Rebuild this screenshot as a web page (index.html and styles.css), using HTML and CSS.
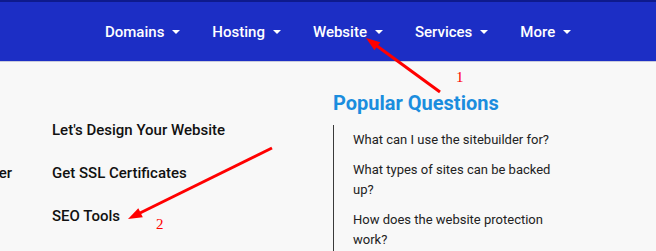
FILE: index.html
```html
<!DOCTYPE html>
<html lang="en">
	<head>
		<meta charset="utf-8">
		<title>Website menu</title>
		<link rel="stylesheet" href="styles.css">
	</head>
	<body>
		<div class="topline"></div>
		<nav class="nav">
			<a class="nav-item">Domains <span class="caret"></span></a>
			<a class="nav-item">Hosting <span class="caret"></span></a>
			<a class="nav-item">Website <span class="caret"></span></a>
			<a class="nav-item">Services <span class="caret"></span></a>
			<a class="nav-item">More <span class="caret"></span></a>
		</nav>
		<div class="content">
			<div class="col-cut">
				<div class="row"></div>
				<div class="row"><span>Website Builder</span></div>
				<div class="row"></div>
			</div>
			<div class="col-menu">
				<div class="row">Let's Design Your Website</div>
				<div class="row">Get SSL Certificates</div>
				<div class="row">SEO Tools</div>
			</div>
			<div class="col-faq">
				<h2 class="faq-title">Popular Questions</h2>
				<div class="faq-list">
					<p class="faq-item">What can I use the sitebuilder for?</p>
					<p class="faq-item">What types of sites can be backed up?</p>
					<p class="faq-item">How does the website protection work?</p>
				</div>
			</div>
		</div>
		<svg class="marks" width="656" height="251" viewBox="0 0 656 251">
			<line x1="440" y1="92" x2="377" y2="46" stroke="#f00" stroke-width="3"/>
			<polygon points="366,38 380.3,42.2 374.4,50.3" fill="#f00"/>
			<text x="456" y="82" class="mark-num">1</text>
			<line x1="272" y1="148" x2="140" y2="213" stroke="#f00" stroke-width="3"/>
			<polygon points="128,219 142.8,217.3 138.3,208.3" fill="#f00"/>
			<text x="156" y="229" class="mark-num">2</text>
		</svg>
	</body>
</html>
```

FILE: styles.css
```css
body {
	margin: 0;
	background-color: #F8F8F8;
	font-family: Roboto, "Liberation Sans", sans-serif;
	overflow: hidden;
}

.topline {
	height: 2px;
	background-color: #0E1A8C;
}

.nav {
	display: flex;
	align-items: center;
	gap: 32px;
	height: 59px;
	padding-left: 105px;
	background-color: #1C2EC5;
	border-bottom: 1px solid #C9CBDC;
}

.nav-item {
	display: flex;
	align-items: center;
	color: #FFFFFF;
	font-size: 15px;
	font-weight: 500;
}

.caret {
	width: 0;
	height: 0;
	margin-left: 8px;
	border-left: 4px solid transparent;
	border-right: 4px solid transparent;
	border-top: 4px solid #FFFFFF;
}

.content {
	display: flex;
}

.col-cut {
	width: 12px;
	padding: 58px 40px 0 0;
	overflow: hidden;
}

.col-cut .row {
	display: flex;
	justify-content: flex-end;
	white-space: nowrap;
}

.col-menu {
	width: 281px;
	padding-top: 58px;
}

.row {
	height: 20px;
	line-height: 20px;
	margin-bottom: 23px;
	font-size: 15px;
	font-weight: 500;
	color: #111111;
}

.col-faq {
	padding-top: 29px;
}

.faq-title {
	margin: 0 0 10px;
	font-size: 20px;
	line-height: 24px;
	font-weight: 700;
	color: #1B8DDE;
}

.faq-list {
	border-left: 1px solid #3A3A3A;
	padding: 5px 0 20px 19px;
	width: 205px;
}

.faq-item {
	margin: 0 0 10px;
	font-size: 13px;
	line-height: 20px;
	color: #222222;
}

.marks {
	position: absolute;
	left: 0;
	top: 0;
}

.mark-num {
	font-family: "Liberation Serif", serif;
	font-size: 15px;
	fill: #F00;
}
```
